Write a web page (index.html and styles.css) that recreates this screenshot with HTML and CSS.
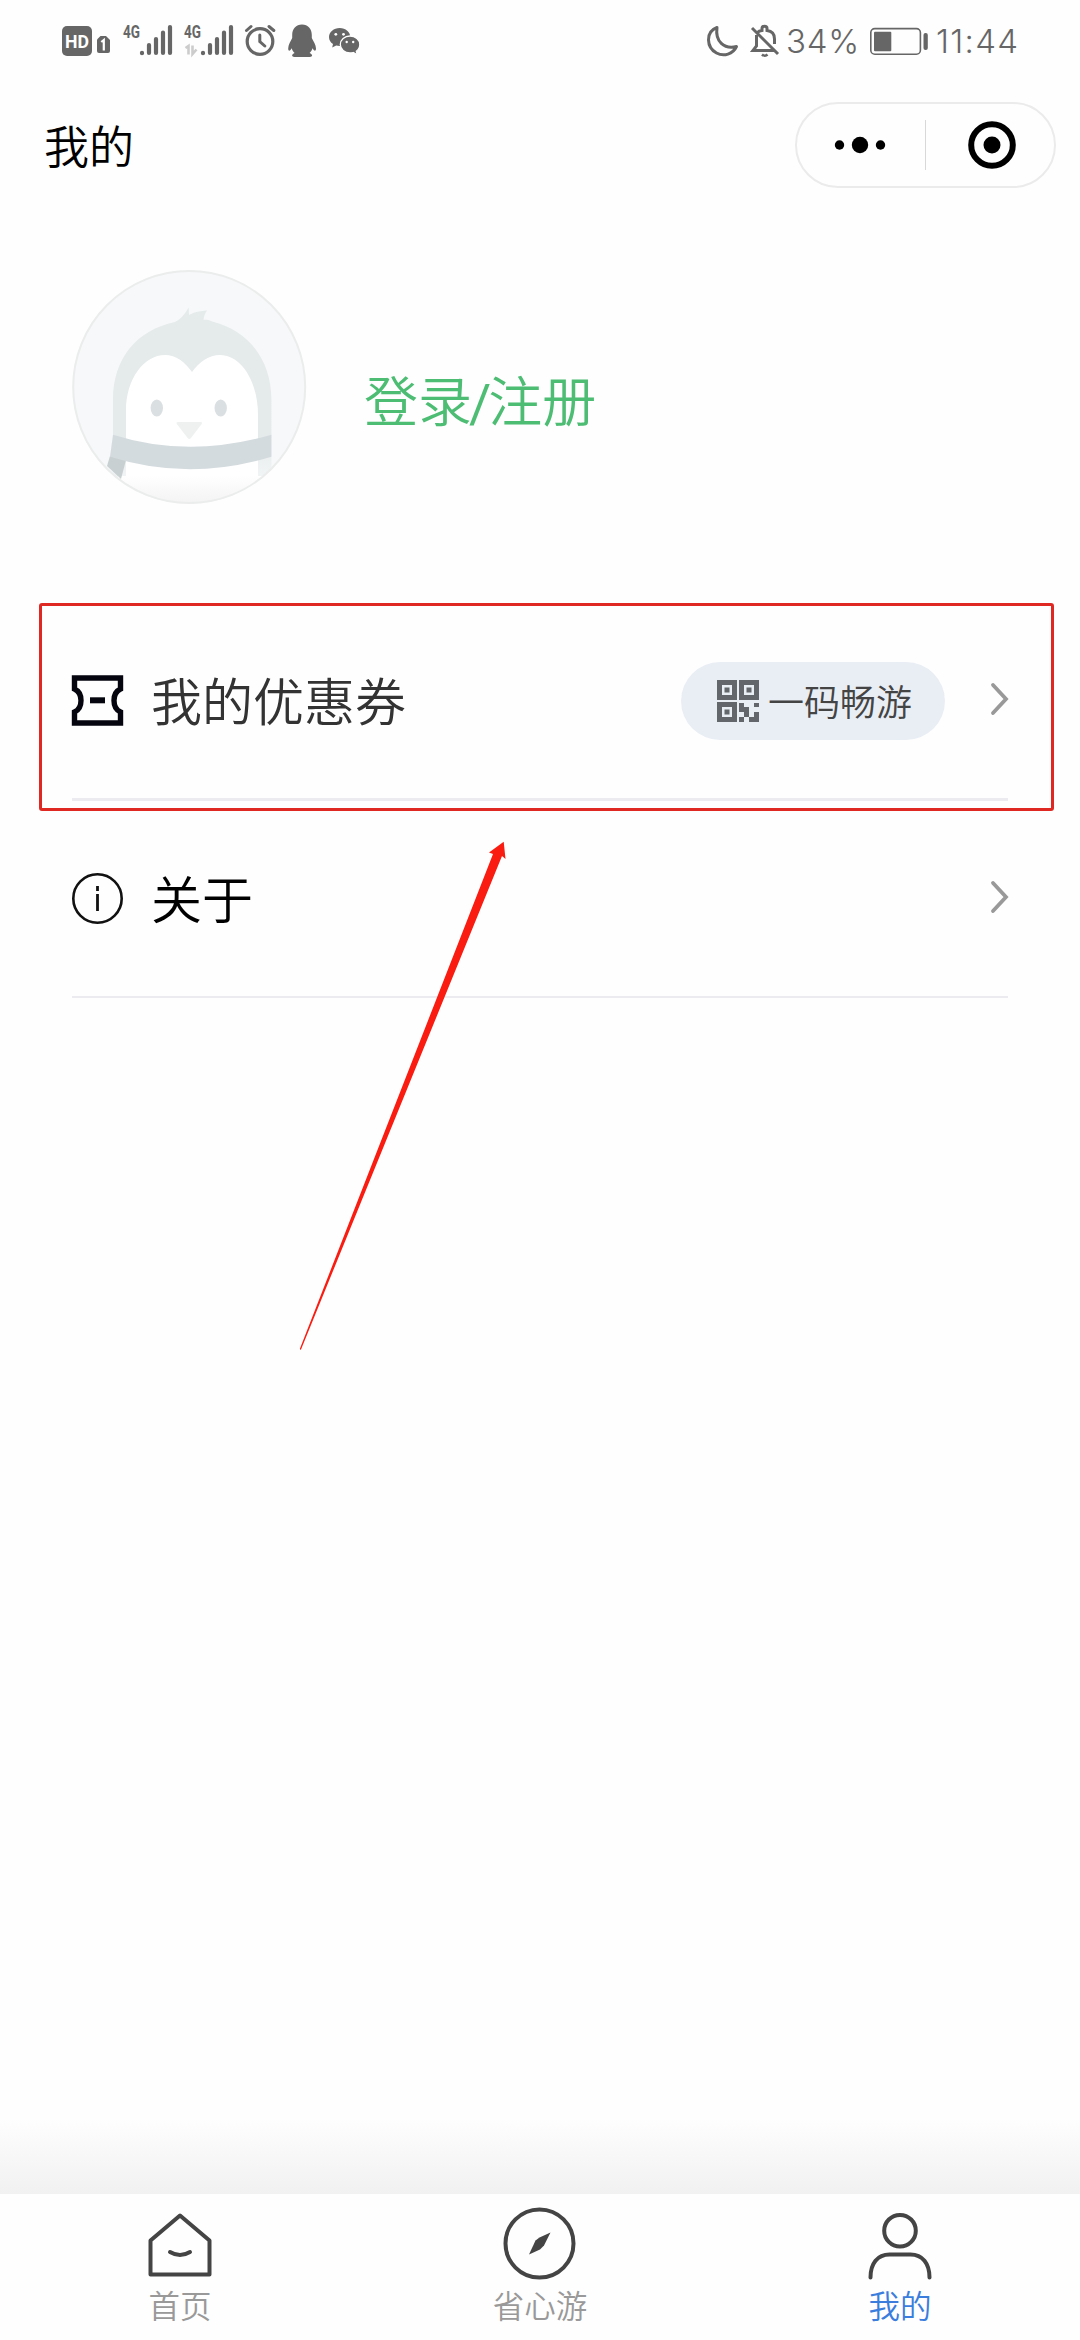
FILE: index.html
```html
<!DOCTYPE html>
<html lang="zh-CN">
<head>
<meta charset="utf-8">
<title>我的</title>
<link rel="stylesheet" href="styles.css">
</head>
<body>
<div class="screen">
  <header class="status">
    <div class="status-left">
      <svg class="hd" width="49" height="34" viewBox="62 24 49 34">
        <rect x="62" y="26" width="30" height="30" rx="5" fill="#666"/>
        <text x="77" y="47.500" text-anchor="middle" textLength="24" lengthAdjust="spacingAndGlyphs" class="badge-text">HD</text>
        <path d="M100.500 36H106l4 4v11a2 2 0 0 1-2 2H99a2 2 0 0 1-2-2V39.500z" fill="#666"/>
        <path d="M101.300 42l2.500-2v10.500" fill="none" stroke="#fff" stroke-width="2.200"/>
      </svg>
      <svg class="signal" width="50" height="34" viewBox="123 24 50 34">
        <text x="123" y="38" textLength="17" lengthAdjust="spacingAndGlyphs" class="net-text">4G</text>
        <path d="M142 53.200v-.4M149 53V45M156 53V39M163 53V32.500M170 53V27" class="bars"/>
      </svg>
      <svg class="signal" width="50" height="34" viewBox="123 24 50 34">
        <text x="123" y="38" textLength="17" lengthAdjust="spacingAndGlyphs" class="net-text">4G</text>
        <path d="M124.500 48l3-2v8.500M131.500 45.500V54l4-4.500" fill="none" stroke="#ccc" stroke-width="2.600"/>
        <path d="M142 53.200v-.4M149 53V45M156 53V39M163 53V32.500M170 53V27" class="bars"/>
      </svg>
      <svg class="alarm" width="32" height="34" viewBox="244 24 32 34">
        <g fill="none" stroke="#666" stroke-width="3" stroke-linecap="round">
          <circle cx="260" cy="41.500" r="12.800" stroke-width="3.200"/>
          <path d="M259.800 35v6.500l5 4.500M246.500 30.500l4.500-4M269 26.500l4.800 4"/>
        </g>
      </svg>
      <svg class="qq" width="29" height="34" viewBox="288 24 29 34">
        <path fill="#666" d="M302 24.500c-6 0-9.800 4.500-9.800 10.500v3c-1.500 3-4 7-4 10.500 0 2 .8 3 2.300 1.500l1.200-1.700c.6 2 1.600 3.500 2.900 4.700-1.500.7-2.500 1.500-2.500 2.500 0 1.200 1.800 1.500 4 1.500h12c2.200 0 4-.3 4-1.500 0-1-1-1.800-2.500-2.500 1.300-1.200 2.300-2.700 2.900-4.700l1.200 1.700c1.500 1.500 2.300.5 2.300-1.500 0-3.500-2.700-7.500-4.200-10.500v-3c0-6-3.800-10.500-9.800-10.500z"/>
      </svg>
      <svg class="wechat" width="32" height="34" viewBox="329 24 32 34">
        <path fill="#666" d="M339.700 28c-6 0-10.700 4-10.700 9 0 3 1.500 5.400 4 7l-.8 3.500 4-2c1.200.3 2.300.5 3.500.5 5.900 0 10.600-4 10.600-9s-4.700-9-10.600-9z"/>
        <path fill="#666" stroke="#fff" stroke-width="1.300" d="M350 36c-5.400 0-9.700 3.800-9.700 8.500s4.300 8.500 9.700 8.500c1.200 0 2.300-.2 3.300-.5l4 2.200-1-3.400c2.200-1.600 3.500-4 3.500-6.800 0-4.700-4.400-8.500-9.800-8.500z"/>
        <g fill="#fff"><circle cx="335.800" cy="34.300" r="1.400"/><circle cx="343.500" cy="34.300" r="1.400"/><circle cx="346.700" cy="42" r="1.200"/><circle cx="353.200" cy="42" r="1.200"/></g>
      </svg>
    </div>
    <div class="status-right">
      <svg width="33" height="34" viewBox="706 23 33 34">
        <path d="M717 26.500c-12 4.500-10.500 20-.5 25.500 7.500 4 16.500 1 20-6.500-12.500 3-21.500-5-19.500-19z" fill="none" stroke="#666" stroke-width="3" stroke-linejoin="round"/>
      </svg>
      <svg class="bell" width="29" height="34" viewBox="751 23 29 34">
        <g fill="none" stroke="#666" stroke-width="3">
          <path d="M752 27l26 26M756.500 34v11l-3.500 4.500h21M757.500 31.500c1-1.200 2.500-1.800 4.500-2v-2c0-3 5-3 5 0v2c5 .5 7.500 4 7.500 8.500v5"/>
          <path d="M762 53.500c1.500 1.500 4 1.500 5.500 0" stroke-width="2.500"/>
        </g>
      </svg>
      <span class="status-text percent">34%</span>
      <svg class="battery" width="60" height="34" viewBox="869 23 60 34">
        <rect x="870.800" y="27.600" width="49.600" height="25.600" rx="4" fill="none" stroke="#666" stroke-width="1.600"/>
        <rect x="874" y="30.700" width="17.300" height="19.500" rx="1" fill="#666"/>
        <rect x="923.500" y="32" width="4.300" height="17" rx="2" fill="#666"/>
      </svg>
      <span class="status-text clock">11:44</span>
    </div>
  </header>

  <div class="nav">
    <h1 class="nav-title">我的</h1>
    <div class="capsule">
      <svg width="52" height="18" viewBox="0 0 52 18"><circle cx="5.500" cy="9" r="4.700"/><circle cx="26" cy="9" r="8.200"/><circle cx="46.500" cy="9" r="4.700"/></svg>
      <i class="capsule-line"></i>
      <svg width="48" height="48" viewBox="0 0 48 48"><circle cx="24" cy="24" r="20.800" fill="none" stroke="#000" stroke-width="6"/><circle cx="24" cy="24" r="8.500"/></svg>
    </div>
  </div>

  <section class="profile">
    <svg class="avatar" width="236" height="236" viewBox="71 269 236 236">
      <defs>
        <clipPath id="disc"><circle cx="189" cy="387" r="116.500"/></clipPath>
        <linearGradient id="belly" x1="0" y1="0" x2="0" y2="1"><stop offset="0" stop-color="#fff"/><stop offset="1" stop-color="#f2f2f2"/></linearGradient>
        <linearGradient id="side" x1="0" y1="0" x2="0" y2="1"><stop offset="0.750" stop-color="#e5eaeb"/><stop offset="1" stop-color="#f1f5f6"/></linearGradient>
      </defs>
      <g clip-path="url(#disc)">
        <rect x="71" y="269" width="236" height="236" fill="#f6f8f9"/>
        <path d="M113 478V400c0-42 24-70 62-78 5-2 10-8 13.600-14.500L189 315c5-3 12-4 18-4.500-2 3-3.400 6-3.400 9.500 3-.5 6 .2 8.400 1.500 37 9 59.400 39 59.400 78.500v78z" fill="url(#side)"/>
        <path d="M126 480v-70c0-31 18-55 39-55 11 0 20 7 27 17 7-10 17-17 28-17 21 0 38 26 38 60v65z" fill="#fff"/>
        <path d="M118 476h146v30H118z" fill="url(#belly)"/>
        <path d="M110 456l16 4-5 19-14-13z" fill="#c9d0d1"/>
        <path d="M113 434.700q76 24 158.400 0v22q-82 25-161.400 0z" fill="#d4dbde"/>
        <ellipse cx="156.800" cy="408" rx="6.200" ry="8.600" fill="#dadfe2"/>
        <ellipse cx="220.700" cy="408" rx="6.200" ry="8.600" fill="#dadfe2"/>
        <path d="M178 422h22.500q2.500 0 1 2.200L191 438q-1.700 2-3.400 0L177 424.200q-1.500-2.200 1-2.200z" fill="#eff1f1"/>
      </g>
      <circle cx="189.200" cy="387" r="116" fill="none" stroke="#ebecec" stroke-width="2"/>
    </svg>
    <a class="login">登录<span class="slash">/</span>注册</a>
  </section>

  <main class="menu">
    <div class="row">
      <svg class="row-icon" width="51" height="51" viewBox="0 0 51 51">
        <path d="M2.500 3H48.500V14Q42 17 42 25.500T48.500 37V48H2.500V37Q9 34 9 25.500T2.500 14Z" fill="none" stroke="#05050f" stroke-width="5.400"/>
        <path d="M18 25.300h15" stroke="#05050f" stroke-width="6"/>
      </svg>
      <span class="row-label coupon">我的优惠券</span>
      <span class="pill">
        <svg width="42" height="42" viewBox="0 0 42 42">
          <g fill="none" stroke="#63666a" stroke-width="5"><path d="M2.500 2.500h15v15h-15zM24.500 2.500h15v15h-15zM2.500 24.500h15v15h-15z"/></g>
          <path fill="#63666a" d="M7.500 7.500h5v5h-5zM29.500 7.500h5v5h-5zM7.500 29.500h5v5h-5zM22 23h5v4h5v10h-5v-5h-5zM37 23h5v4h-5zM22 37h5v5h-5zM37 32h5v10h-10v-5h5z"/>
        </svg>
        <span class="pill-label">一码畅游</span>
      </span>
      <svg class="chevron" width="17" height="32" viewBox="0 0 17 32"><path d="M2 2l13 14L2 30"/></svg>
    </div>
    <div class="row about">
      <svg class="row-icon" width="51" height="51" viewBox="0 0 51 51">
        <circle cx="25.500" cy="25.500" r="24.200" fill="none" stroke="#111" stroke-width="2.600"/>
        <path d="M25.500 13v5M25.500 21v17" stroke="#111" stroke-width="2.800"/>
      </svg>
      <span class="row-label">关于</span>
      <svg class="chevron" width="17" height="32" viewBox="0 0 17 32"><path d="M2 2l13 14L2 30"/></svg>
    </div>
  </main>

  <nav class="tabs">
    <a class="tab">
      <svg width="76" height="76" viewBox="142 2206 76 76"><g class="tab-stroke"><path d="M150.500 2240.500L180 2215.500l29.500 25V2274.500h-59z"/><path d="M170 2252q10 6 20 0"/></g></svg>
      <span>首页</span>
    </a>
    <a class="tab">
      <svg width="76" height="76" viewBox="501 2206 76 76"><circle cx="538.500" cy="2243.500" r="34" class="tab-stroke"/><path fill="#444" d="M549.500 2232.500l-6.500 13-4 4-11 5 6.500-14 4-3z"/></svg>
      <span>省心游</span>
    </a>
    <a class="tab active">
      <svg width="76" height="76" viewBox="862 2206 76 76"><g class="tab-stroke"><circle cx="900" cy="2230.700" r="15.800"/><path d="M870.500 2277.500c0-14 7-23 19-23h21c12 0 19 9 19 23"/></g></svg>
      <span>我的</span>
    </a>
  </nav>

  <div class="highlight"></div>
  <svg class="arrow" width="212" height="514" viewBox="296 838 212 514">
    <path fill="#fa1c10" d="M503.700 841.700L505.500 859l-3.500-3L300.800 1350l-1-1L493 854l-4-1.500z"/>
  </svg>
</div>
</body>
</html>
```
FILE: styles.css
```css
* { box-sizing: border-box; }

body {
  margin: 0;
  background: #fefefe;
  font-family: "Noto Sans CJK SC", "Noto Sans", sans-serif;
  font-weight: 350;
  color: #000;
}

svg { display: block; flex: none; overflow: visible; }

.screen {
  position: relative;
  display: flex;
  flex-direction: column;
  width: 1080px;
  height: 2340px;
  overflow: hidden;
}

/* System status bar */
.status {
  display: flex;
  justify-content: space-between;
  height: 82px;
  padding: 24px 62px 0;
  flex: none;
}
.status-left, .status-right { display: flex; align-items: center; height: 34px; }
.signal { margin-left: 11px; }
.hd + .signal { margin-left: 12px; }
.alarm { margin-left: 10px; }
.qq { margin-left: 12px; }
.wechat { margin-left: 12px; }
.bell { margin-left: 12px; }
.badge-text { font: 700 18px Roboto, sans-serif; fill: #fff; }
.net-text { font: 700 18px Roboto, sans-serif; fill: #666; }
.bars { stroke: #666; stroke-width: 4.200; stroke-linecap: round; }
.status-text {
  font: 300 33px/34px Inter, sans-serif;
  color: #666;
  white-space: nowrap;
}
.percent { width: 82px; padding-left: 6px; letter-spacing: 0.8px; }
.battery { margin-left: 7px; }
.clock { width: 82px; margin-left: 7px; letter-spacing: 1.3px; }

/* Mini program title bar */
.nav {
  display: flex;
  align-items: center;
  justify-content: space-between;
  height: 126px;
  padding: 0 24px 0 44px;
  flex: none;
}
.nav-title { margin: 0; font-size: 45px; line-height: 66px; font-weight: 350; }
.capsule {
  display: flex;
  align-items: center;
  width: 261px;
  height: 86px;
  padding: 0 37px;
  border: 2px solid #ebebeb;
  border-radius: 43px;
}
.capsule-line { width: 1px; height: 50px; margin: 0 42px 0 39px; background: #d8d8d8; }

/* Profile */
.profile {
  display: flex;
  align-items: center;
  height: 395px;
  padding: 0 71px 37px;
  flex: none;
}
.login { margin: 28px 0 0 57px; font-size: 54px; line-height: 78px; color: #4dbd74; }
.slash { margin: 0 -3px; font-family: Roboto, sans-serif; font-weight: 400; }

/* Menu */
.menu { flex: 1; padding: 0 72px; }
.row {
  display: flex;
  align-items: center;
  height: 198px;
  border-bottom: 3px solid #ececf0;
}
.row.about { height: 197px; border-bottom-width: 2px; }
.row-label { margin: 0 0 4px 28px; font-size: 51px; line-height: 74px; }
.coupon { color: #333; }
.pill {
  display: flex;
  align-items: center;
  gap: 9px;
  width: 264px;
  height: 78px;
  margin-left: auto;
  padding-left: 36px;
  border-radius: 39px;
  background: #e9eef5;
  color: #444;
  font-size: 36px;
  line-height: 52px;
  white-space: nowrap;
}
.pill-label { margin-bottom: 2px; }
.chevron { margin: 0 0 4px auto; fill: none; stroke: #999; stroke-width: 3.800; stroke-linecap: round; }
.pill + .chevron { margin-left: 46px; }

/* Bottom tabs */
.tabs {
  display: flex;
  flex: none;
  height: 222px;
  padding-top: 88px;
  background: linear-gradient(#fefefe, #f1f1f1) 0 0 / 100% 76px no-repeat;
}
.tab {
  display: flex;
  flex: 1;
  flex-direction: column;
  align-items: center;
  font-size: 31.500px;
  line-height: 44px;
  color: #999;
}
.tab.active { color: #3b7ddd; }
.tab-stroke {
  fill: none;
  stroke: #444;
  stroke-width: 4;
  stroke-linecap: round;
  stroke-linejoin: round;
}

/* Annotations drawn over the screen */
.highlight {
  position: absolute;
  left: 39px;
  top: 603px;
  width: 1015px;
  height: 208px;
  border: 3px solid #e02822;
  border-radius: 3px;
}
.arrow { position: absolute; left: 296px; top: 838px; }
```
